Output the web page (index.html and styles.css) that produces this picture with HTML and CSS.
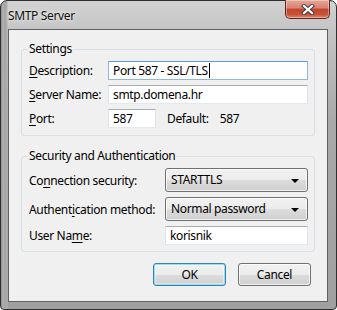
FILE: index.html
```html
<!DOCTYPE html>
<html lang="en">
<head>
  <meta charset="UTF-8">
  <title>SMTP Server</title>
  <link rel="stylesheet" href="styles.css">
</head>
<body>

<div class="window">
  <div class="titlebar">
    <span class="title">SMTP Server</span>
    <div class="close-btn">
      <svg width="14" height="11" viewBox="0 0 14 11">
        <path d="M3 2 L11 9 M11 2 L3 9" stroke="#3a3f4a" stroke-width="4.2" stroke-linecap="square"/>
        <path d="M3 2 L11 9 M11 2 L3 9" stroke="#fff" stroke-width="2.2" stroke-linecap="square"/>
      </svg>
    </div>
  </div>

  <div class="client">
    <fieldset class="group">
      <legend>Settings</legend>
      <div class="form-grid settings-grid">
        <span class="label"><u>D</u>escription:</span>
        <div class="textbox focused">Port 587 - SSL/TLS<span class="caret"></span></div>

        <span class="label"><u>S</u>erver Name:</span>
        <div class="textbox">smtp.domena.hr</div>

        <span class="label"><u>P</u>ort:</span>
        <div class="port-row">
          <div class="textbox port-box">587</div>
          <span class="default-label">Default:</span>
          <span>587</span>
        </div>
      </div>
    </fieldset>

    <fieldset class="group security">
      <legend>Security and Authentication</legend>
      <div class="form-grid security-grid">
        <span class="label">Co<u>n</u>nection security:</span>
        <div class="dropdown">STARTTLS<span class="arrow"></span></div>

        <span class="label">Authent<u>i</u>cation method:</span>
        <div class="dropdown">Normal password<span class="arrow"></span></div>

        <span class="label">User Na<u>m</u>e:</span>
        <div class="textbox">korisnik</div>
      </div>
    </fieldset>

    <div class="buttons">
      <button class="btn default">OK</button>
      <button class="btn">Cancel</button>
    </div>
  </div>
</div>

</body>
</html>
```

FILE: styles.css
```css
html, body {
  margin: 0;
  padding: 0;
  width: 337px;
  height: 310px;
  background: #ffffff;
  font-family: "Noto Sans", "Open Sans", sans-serif;
  font-size: 12px;
  letter-spacing: -0.35px;
  color: #000;
}

.window {
  position: relative;
  width: 337px;
  height: 310px;
  box-sizing: border-box;
  padding: 0 8px 7px 7px;
  border: 1px solid #2f2f2f;
  border-radius: 7px 7px 4px 4px;
  background:
    linear-gradient(90deg, #8c8c8c 0, #b4b4b4 2px, #a2a2a2 4px, #b0b0b0 6px, transparent 7px),
    linear-gradient(180deg, #d2d2d2 0, #c4c4c4 30px, #a9a9a9 120px, #a0a0a0 310px);
  display: flex;
  flex-direction: column;
}

.titlebar {
  height: 28px;
  display: flex;
  align-items: flex-start;
}

.title {
  margin-top: 6px;
  margin-left: 0;
  color: #111;
  text-shadow: 0 0 6px #e8e8e8, 0 0 3px #f0f0f0;
}

.close-btn {
  position: absolute;
  top: -1px;
  right: 6px;
  width: 45px;
  height: 19px;
  box-sizing: border-box;
  border: 1px solid #5b2a22;
  border-top: none;
  border-radius: 0 0 5px 5px;
  background: linear-gradient(180deg, #e6a596 0, #d98471 45%, #c4452c 50%, #c95236 80%, #e0876a 100%);
  box-shadow: inset 0 0 0 1px rgba(255, 255, 255, 0.35);
  display: flex;
  justify-content: center;
  align-items: center;
}

.client {
  flex: 1;
  border: 1px solid #5e6165;
  background: #f0f0f0;
  padding: 0 12px 0 12px;
  display: flex;
  flex-direction: column;
}

.group {
  margin: 12px 0 0 0;
  padding: 5px 6px 7px 7px;
  border: 1px solid #d5dfe5;
  border-radius: 3px;
  min-width: 0;
}

.group legend {
  padding: 0 1px;
  margin-left: -1px;
  line-height: 14px;
}

.group.security {
  margin-top: 13px;
  padding-bottom: 6px;
}

.form-grid {
  display: grid;
  row-gap: 5px;
  align-items: center;
}

.settings-grid {
  grid-template-columns: 79px 1fr;
}

.security-grid {
  grid-template-columns: 136px 1fr;
}

.label u {
  text-underline-offset: 2px;
}

.textbox {
  height: 19px;
  box-sizing: border-box;
  background: #fff;
  border: 1px solid #e2e3ea;
  border-top-color: #abadb3;
  border-bottom-color: #e3e9ef;
  padding: 0 4px;
  line-height: 17px;
  white-space: nowrap;
}

.textbox.focused {
  border-color: #8fb9e0;
  border-top-color: #569de5;
}

.caret {
  display: inline-block;
  width: 1px;
  height: 15px;
  margin-left: 1px;
  background: #000;
  vertical-align: -3px;
}

.port-row {
  display: flex;
  align-items: center;
}

.port-box {
  width: 48px;
}

.default-label {
  margin-left: 11px;
  margin-right: 11px;
}

.dropdown {
  position: relative;
  height: 24px;
  box-sizing: border-box;
  border: 1px solid #707070;
  border-radius: 3px;
  padding: 0 5px;
  line-height: 22px;
  background: linear-gradient(180deg, #f2f2f2 0, #ebebeb 50%, #dddddd 50%, #cfcfcf 100%);
  box-shadow: inset 0 0 0 1px rgba(255, 255, 255, 0.7);
}

.arrow {
  position: absolute;
  right: 8px;
  top: 10px;
  width: 0;
  height: 0;
  border-left: 4px solid transparent;
  border-right: 4px solid transparent;
  border-top: 4px solid #000;
}

.buttons {
  display: flex;
  justify-content: flex-end;
  gap: 12px;
  margin-top: 11px;
  padding-right: 4px;
}

.btn {
  width: 73px;
  height: 23px;
  font-family: inherit;
  font-size: 12px;
  letter-spacing: inherit;
  color: #000;
  border: 1px solid #707070;
  border-radius: 3px;
  padding: 0;
  background: linear-gradient(180deg, #f2f2f2 0, #ebebeb 50%, #dddddd 50%, #cfcfcf 100%);
  box-shadow: inset 0 0 0 1px rgba(255, 255, 255, 0.7);
}

.btn.default {
  border-color: #3c7fb1;
  box-shadow: inset 0 0 0 1px #8ee0f8, inset 0 0 0 2px rgba(255, 255, 255, 0.4);
}
```
